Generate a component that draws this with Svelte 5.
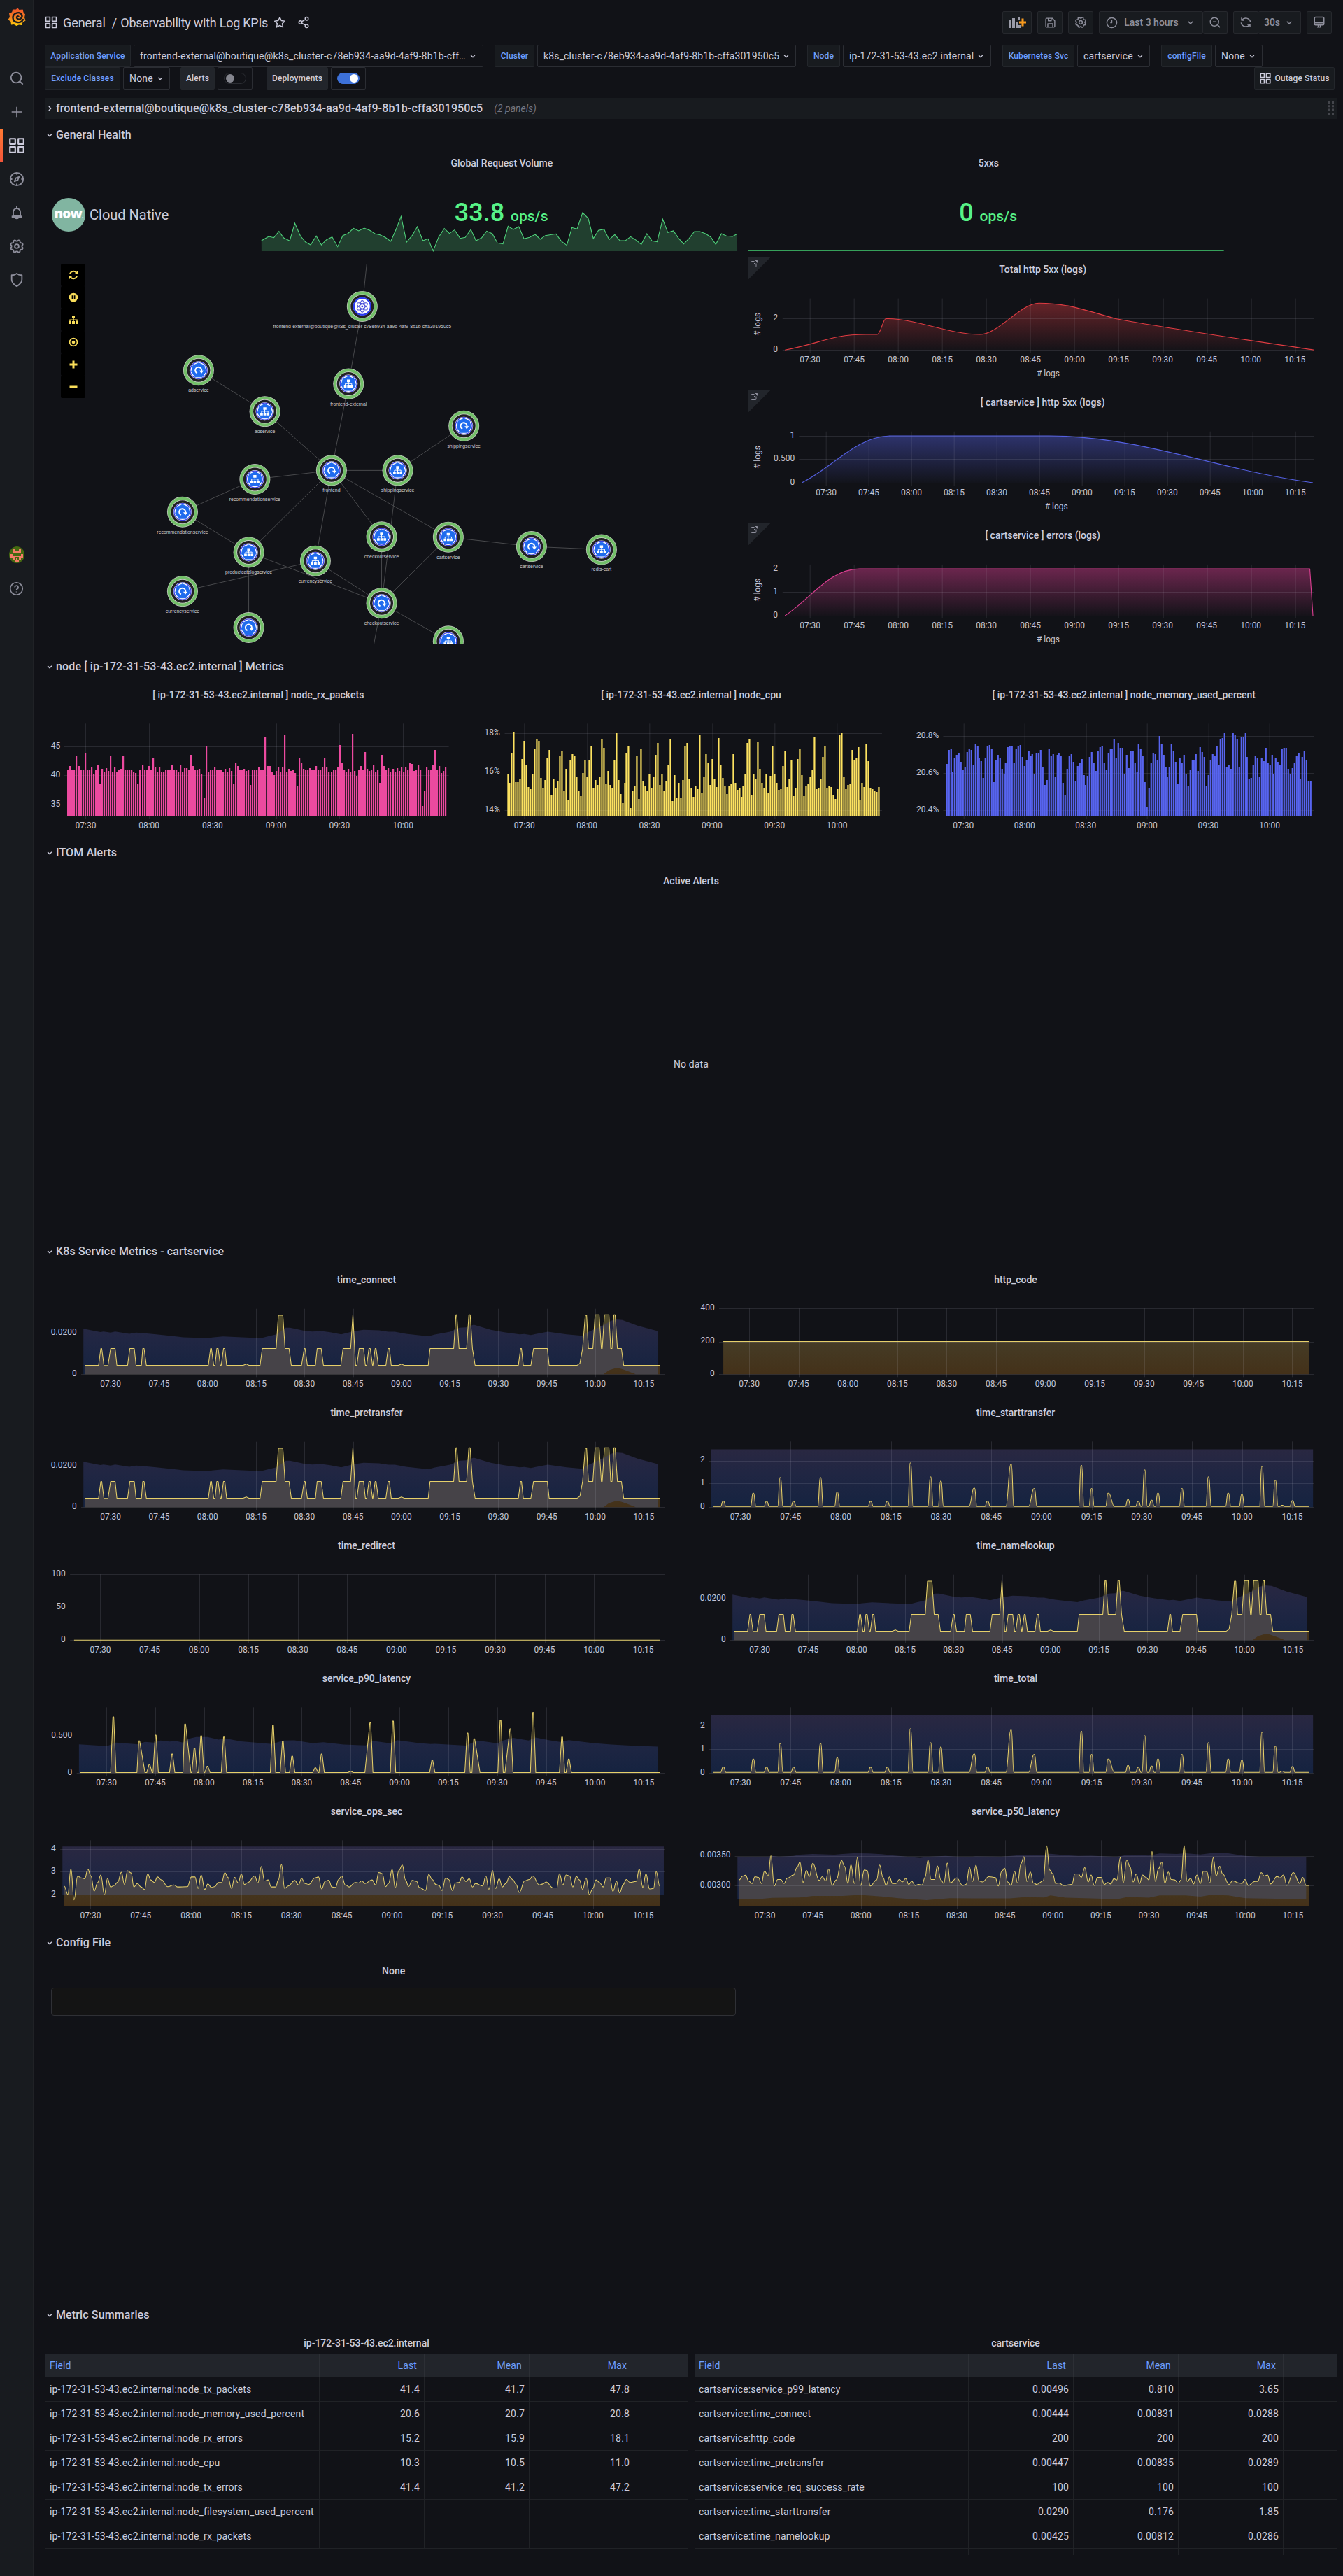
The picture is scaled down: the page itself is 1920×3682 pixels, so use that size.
<script>
  const PITCH = (1848 + 8) / 24;

  // Outline icons on a 24-unit canvas
  const icons = {
    search: 'M21.5 21.5l-4.6-4.6M19 11a8 8 0 1 1-16 0a8 8 0 0 1 16 0z',
    plus: 'M12 4v16M4 12h16',
    apps: 'M3 3h7v7h-7zM14 3h7v7h-7zM3 14h7v7h-7zM14 14h7v7h-7z',
    compass: 'M22 12a10 10 0 1 1-20 0a10 10 0 0 1 20 0zM12 2v3M12 19v3M2 12h3M19 12h3M15.5 8.5l-2 5l-5 2l2-5z',
    bell: 'M12 2v3M5 17h14M6.500 17v-6a5.500 5.500 0 0 1 11 0v6M9 17v1a3 3 0 0 0 6 0v-1M5 17v2h14v-2',
    shield: 'M4 4.500c3 .5 5.500-.3 8-2.500c2.500 2.200 5 3 8 2.500v7c0 5-3.500 8-8 10.500c-4.500-2.500-8-5.500-8-10.500z',
    help: 'M22 12a10 10 0 1 1-20 0a10 10 0 0 1 20 0zM9.300 9.800a2.800 2.800 0 1 1 4 2.600c-.9.5-1.300 1-1.300 1.900M12 16.500v1.200',
    star: 'M12 2.500l3 6.200l6.700 1l-4.900 4.700l1.200 6.800l-6-3.300l-6 3.300l1.200-6.800l-4.900-4.700l6.700-1z',
    share: 'M21 5a3 3 0 1 1-6 0a3 3 0 0 1 6 0zM9 12a3 3 0 1 1-6 0a3 3 0 0 1 6 0zM21 19a3 3 0 1 1-6 0a3 3 0 0 1 6 0zM15.500 6.500l-7 4M15.500 17.500l-7-4',
    save: 'M3 5a2 2 0 0 1 2-2h11l5 5v11a2 2 0 0 1-2 2h-14a2 2 0 0 1-2-2zM8 3v5h6v-5M7 21v-7h10v7',
    clock: 'M22 12a10 10 0 1 1-20 0a10 10 0 0 1 20 0zM12 6v6h-3',
    zoomout: 'M21.500 21.500l-4.600-4.600M19 11a8 8 0 1 1-16 0a8 8 0 0 1 16 0zM8 11h6',
    sync: 'M4 3v5h5M4.500 8a9 9 0 0 1 16.400 3.500M20 21v-5h-5M19.500 16a9 9 0 0 1-16.400-3.500',
    monitor: 'M5 2h14a2 2 0 0 1 2 2v11a2 2 0 0 1-2 2h-14a2 2 0 0 1-2-2v-11a2 2 0 0 1 2-2zM3 13h18M8 21h8M10 17v4M14 17v4',
    down: 'M7 10l5 5l5-5',
    right: 'M10 7l5 5l-5 5',
    ext: 'M18 11v8a2 2 0 0 1-2 2h-11a2 2 0 0 1-2-2v-12a2 2 0 0 1 2-2h8M15 3h6v6M21 3l-10 10',
    cog: gear(12, 12, 9.9, 8.1, 8) + 'M15.200 12a3.200 3.200 0 1 1-6.400 0a3.200 3.200 0 0 1 6.400 0z'
  };

  // Closed outline with n rounded teeth
  function gear(cx, cy, ro, ri, n) {
    const pts = [];
    for (let i = 0; i < n * 12; i++) {
      const a = (i / (n * 12)) * Math.PI * 2 + Math.PI / n;
      const k = Math.tanh(Math.cos(a * n) * -2.5);
      const r = (ro + ri) / 2 + ((ro - ri) / 2) * k;
      pts.push((cx + r * Math.cos(a)).toFixed(2) + ' ' + (cy + r * Math.sin(a)).toFixed(2));
    }
    return 'M' + pts.join('L') + 'Z';
  }

  // Coordinate frames: origin on the dashboard plus units per pixel
  const LOGS = { ox: 1040, oy: 360, sx: 1568 / 880, sy: 1568 / 580 };
  const NODE = { ox: 0, oy: 920, sx: 1568 / 960, sy: 3 };
  const NODE_R = { ...NODE, ox: 960 };
  const SVC_L = { ox: 0, oy: 1770, sx: 1.568, sy: 2.8 };
  const SVC_R = { ox: 960, oy: 1770, sx: 1568 / 960, sy: 2.8 };
  const SVC2_L = { ...SVC_L, oy: 2330 };
  const SVC2_R = { ...SVC_R, oy: 2330 };
  const STAT = { ox: 0, oy: 0, sx: 1568 / 960, sy: 3 };

  const parse = (s) => s.trim().split(/\s+/).map((p) => p.split(',').map(Number));
  const toPage = (f, pts) => pts.map(([x, y]) => [f.ox + x / f.sx, f.oy + y / f.sy]);
  const n2 = (v) => v.toFixed(2);
  const straight = (pts) => 'M' + pts.map(([x, y]) => n2(x) + ' ' + n2(y)).join('L');
  function smooth(pts) {
    let d = 'M' + n2(pts[0][0]) + ' ' + n2(pts[0][1]);
    for (let i = 1; i < pts.length; i++) {
      const [x0, y0] = pts[i - 1];
      const [x1, y1] = pts[i];
      const w = (x1 - x0) * 0.42;
      d += 'C' + [x0 + w, y0, x1 - w, y1, x1, y1].map(n2).join(' ');
    }
    return d;
  }
  function spikes(start, end, base, list) {
    const out = [[start, base]];
    for (const [x, y, l = 6, r = 6] of list) out.push([x - l, base], [x - 1, y], [x + 1, y], [x + r, base]);
    out.push([end, base]);
    return out;
  }

  const quarter = ['07:30', '07:45', '08:00', '08:15', '08:30', '08:45', '09:00', '09:15', '09:30', '09:45', '10:00', '10:15'];
  const half = ['07:30', '08:00', '08:30', '09:00', '09:30', '10:00'];

  let uid = 0;
  function chart(f, o) {
    const X = (x) => f.ox + x / f.sx;
    const Y = (y) => f.oy + y / f.sy;
    const names = o.half ? half : quarter;
    const step = (o.last - o.first) / (names.length - 1);
    const c = {
      id: 'c' + uid++,
      xs: names.map((t, i) => ({ t, x: X(o.first + step * i) })),
      ys: o.grid.map(([t, y]) => ({ t, y: Y(y) })),
      left: X(o.left), right: X(o.right), top: Y(o.top), bottom: Y(o.bottom), lab: X(o.lab),
      color: o.color, axis: o.axis, kind: o.kind, fillOp: o.fillOp
    };
    if (o.line) {
      const p = toPage(f, o.line);
      c.line = o.curve ? o.curve(p) : (o.soft ? smooth(p) : straight(p));
      c.area = c.line + 'L' + n2(p[p.length - 1][0]) + ' ' + n2(c.bottom) + 'L' + n2(p[0][0]) + ' ' + n2(c.bottom) + 'Z';
    }
    if (o.band) {
      c.band = straight(toPage(f, o.band)) + 'Z';
    }
    if (o.bars) {
      const w = (o.barEnd - o.barStart) / (o.bars.length - 1);
      c.bars = o.bars.map((y, i) => ({ x: Math.round(X(o.barStart + w * i) - 1), y: Math.round(Y(y)) }));
      c.barBottom = Math.round(Y(740));
    }
    return c;
  }

  // Log panels
  const logRed = chart(LOGS, { first: 211, last: 1446, top: 180, bottom: 379, left: 141, right: 1494, lab: 129, grid: [['2', 258], ['0', 379]], color: '#e03c42', axis: true, kind: 'log', fillOp: 0.45,
    line: parse('147,379 353,319 382,319 404,258 644,319 794,198 989,258 1495,379'),
    curve: (p) => {
      const [a, b, c, d, e, f, g, h] = p;
      return `M${a}C${a[0] + 50} ${a[1] - 9} ${b[0] - 50} ${b[1]} ${b}L${c}C${c[0] + 5} ${c[1]} ${d[0] - 4} ${d[1]} ${d}C${d[0] + 45} ${d[1]} ${e[0] - 45} ${e[1]} ${e}C${e[0] + 26} ${e[1]} ${f[0] - 26} ${f[1]} ${f}C${f[0] + 42} ${f[1]} ${g[0] - 40} ${g[1] - 11} ${g}C${g[0] + 80} ${g[1] + 15} ${h[0] - 80} ${h[1] - 12} ${h}`;
    } });
  const logBlue = chart(LOGS, { first: 252, last: 1447, top: 694, bottom: 893, left: 183, right: 1494, lab: 172, grid: [['1', 712], ['0.500', 801], ['0', 893]], color: '#5460e0', axis: true, kind: 'log', fillOp: 0.46,
    line: parse('190,892 418,711 820,711 1492,892'),
    curve: ([a, b, c, d]) => `M${a}C${a[0] + 45} ${a[1] - 22} ${b[0] - 50} ${b[1]} ${b}L${c}C${c[0] + 130} ${c[1]} ${d[0] - 130} ${d[1] - 17} ${d}` });
  const logPink = chart(LOGS, { first: 211, last: 1446, top: 1208, bottom: 1406, left: 141, right: 1494, lab: 129, grid: [['2', 1226], ['1', 1315], ['0', 1406]], color: '#dc3f92', axis: true, kind: 'log', fillOp: 0.48,
    line: parse('147,1406 337,1225 1484,1225 1492,1406'),
    curve: ([a, b, c, d]) => `M${a}C${a[0] + 37} ${a[1] - 24} ${b[0] - 43} ${b[1]} ${b}L${c}L${d}` });

  // Node metric bars
  const rxPeaks = { 180: 480, 185: 525, 200: 468, 219: 560, 228: 522, 234: 603, 259: 480, 289: 480, 319: 556, 324: 600, 333: 522, 357: 489, 402: 522, 422: 522, 447: 477, 472: 558, 477: 660, 481: 438, 545: 600, 550: 510, 584: 606, 620: 399, 625: 525, 630: 525, 640: 565, 664: 390, 689: 555, 694: 609, 699: 492, 704: 513, 757: 492, 793: 435, 798: 510, 823: 387, 832: 568, 842: 525, 852: 465, 872: 522, 886: 597, 891: 477, 896: 525, 955: 513, 960: 516, 977: 519, 986: 696, 991: 630, 1011: 520, 1016: 456, 1030: 555, 1040: 528 };
  const rxBase = [543, 537, 531, 543, 528, 525, 549, 540, 541, 549, 541, 534, 540, 543, 549, 540, 546, 534, 543, 544, 537, 531, 540, 549, 541, 546, 552];
  const rxBars = [];
  for (let i = 0; i < 179; i++) {
    const x = 159 + i * 4.955;
    const hit = Object.keys(rxPeaks).find((k) => Math.abs(k - x) < 2.48);
    rxBars.push(hit ? rxPeaks[hit] : rxBase[(i * 5 + (i >> 3)) % rxBase.length]);
  }
  const cpuBars = '561 597 471 378 594 594 579 495 417 519 615 624 561 453 408 417 576 621 585 489 456 651 579 618 591 480 459 633 537 669 501 474 480 570 630 654 555 498 573 501 441 621 585 606 573 408 447 600 546 606 618 498 384 585 645 684 597 468 438 705 630 612 480 666 453 591 612 630 558 618 573 477 426 606 561 630 588 519 408 675 564 663 597 660 585 441 426 579 621 657 609 624 393 639 570 474 513 606 495 579 615 405 522 576 612 645 612 603 474 597 627 618 657 609 558 426 408 648 561 582 423 537 597 618 561 642 567 441 558 597 627 624 525 462 615 582 498 654 618 495 450 564 654 609 600 573 540 399 624 621 579 486 441 621 609 615 651 666 624 393 384 573 624 606 603 456 501 489 444 672 597 615 432 504 621 624 630 636 615'.split(' ').map(Number);
  const memBars = '516 456 453 552 489 477 471 507 543 528 465 450 456 519 432 438 492 504 576 489 438 435 453 594 501 477 492 537 558 510 444 438 441 510 450 438 435 486 525 501 462 480 474 561 468 471 456 528 606 585 453 480 474 573 477 471 480 597 648 537 483 474 507 588 525 510 495 564 606 567 486 465 510 546 462 444 438 510 543 471 453 453 411 492 426 447 447 558 477 534 462 459 510 552 432 450 483 594 700 621 513 468 474 498 396 432 477 531 570 531 432 462 507 600 492 510 477 558 612 543 498 501 474 546 444 465 486 609 564 498 474 483 441 522 411 405 381 528 519 537 384 390 408 531 402 402 384 486 582 576 519 480 489 573 489 504 447 513 522 477 558 489 507 522 453 447 447 537 561 534 513 483 471 582 486 462 498 588 588'.split(' ').map(Number);
  const nodeRx = chart(NODE, { half: true, first: 200, last: 941, top: 343, bottom: 740, left: 150, right: 1048, lab: 141, grid: [['45', 442], ['40', 565], ['35', 690]], color: '#ec4a9f', kind: 'bars', bars: rxBars, barStart: 159, barEnd: 1041 });
  const nodeCpu = chart(NODE, { half: true, first: 1224, last: 1954, top: 343, bottom: 740, left: 1178, right: 2059, lab: 1167, grid: [['18%', 385], ['16%', 550], ['14%', 715]], color: '#fde260', kind: 'bars', bars: cpuBars, barStart: 1185, barEnd: 2052 });
  const nodeMem = chart(NODE_R, { half: true, first: 682, last: 1397, top: 343, bottom: 740, left: 635, right: 1500, lab: 625, grid: [['20.8%', 397], ['20.6%', 556], ['20.4%', 715]], color: '#5764f0', kind: 'bars', bars: memBars, barStart: 643, barEnd: 1493 });

  // Service metrics
  const connLine = parse('190,508 221,508 226,441 228,441 233,509 242,509 248,441 258,441 262,508 286,508 291,441 301,441 305,508 317,508 320,441 323,441 328,508 467,508 472,441 474,441 479,508 482,508 486,441 489,441 494,508 496,508 501,441 504,441 508,508 545,508 552,503 558,508 583,508 588,441 619,441 624,308 634,308 639,441 648,441 653,508 676,508 682,441 684,441 689,508 707,508 711,441 720,441 725,508 764,508 769,441 786,441 791,306 797,508 800,508 805,441 815,441 819,508 822,508 827,441 830,441 835,508 836,508 841,441 843,441 848,508 865,508 870,441 873,441 877,508 893,508 900,503 906,508 960,508 964,441 1017,441 1022,306 1024,306 1029,441 1046,441 1051,306 1054,306 1059,441 1065,508 1162,508 1167,441 1169,441 1173,508 1190,508 1196,441 1227,441 1231,508 1294,508 1300,500 1306,441 1312,308 1315,308 1319,441 1329,441 1334,306 1343,306 1348,441 1350,441 1355,306 1365,306 1369,441 1372,441 1376,306 1379,306 1384,441 1393,441 1398,508 1479,508');
  const connBand = parse('187,362 225,375 232,373 248,377 258,373 290,382 305,377 325,380 350,384 380,390 410,396 470,400 475,397 500,393 585,400 600,393 620,384 640,358 650,358 683,370 700,373 720,371 740,376 765,384 790,373 815,366 850,368 870,374 885,374 910,382 960,392 975,385 1009,374 1030,358 1045,356 1062,346 1100,366 1130,376 1165,384 1175,383 1190,387 1228,374 1270,384 1305,390 1320,374 1335,362 1350,350 1370,330 1380,325 1395,327 1430,350 1474,371 1474,544 1425,544 1405,530 1390,521 1378,521 1365,528 1353,544 187,544');
  const moved = (pts, dy, fx = (x) => x) => pts.map(([x, y]) => [fx(x), y + dy]);
  const conn = (f, dy, fx = (x) => x, o = {}) => chart(f, { first: 248, last: 1443, top: 282 + dy, bottom: 544 + dy, left: 182, right: 1490, lab: 172, grid: [['0.0200', 379 + dy], ['0', 544 + dy]], kind: 'svc', line: moved(connLine, dy, fx), band: moved(connBand, dy, fx), ...o });
  const connect = conn(SVC_L, 0);
  const pretransfer = conn(SVC_L, 532);
  const namelookup = conn(SVC_R, 1064, (x) => 206 + (x - 248) * 1.0418, { first: 206, last: 1451, left: 137, right: 1500, lab: 127 });
  const httpCode = chart(SVC_R, { first: 181.5, last: 1449.5, top: 281, bottom: 544, left: 111, right: 1500, lab: 101, grid: [['400', 281], ['200', 413], ['0', 544]], kind: 'svc', line: [[121, 413], [1489, 413]] });
  const redirect = chart(SVC_L, { first: 225, last: 1442, top: 1345, bottom: 1608, left: 157, right: 1490, lab: 147, grid: [['100', 1345], ['50', 1477], ['0', 1608]], kind: 'svc', line: [[166, 1608], [1480, 1608]] });

  const startPeaks = [[121, 1052], [191, 1020], [222, 1053], [254, 958], [285, 1053], [348, 958], [387, 1015], [465, 1053], [504, 1053], [558, 899], [605, 955], [629, 972], [707, 1000, 12], [738, 1052], [793, 904, 12], [847, 1002, 13], [957, 909], [981, 1002], [1020, 1020, 6, 14], [1066, 1046], [1090, 1053], [1105, 927], [1121, 1048], [1136, 1020], [1192, 1002], [1254, 955], [1300, 1020], [1332, 1025], [1379, 913], [1410, 969], [1426, 1068], [1450, 1050]];
  const start = (f, dy) => chart(f, { first: 161, last: 1449.5, top: 813 + dy, bottom: 1076 + dy, left: 88, right: 1500, lab: 78, grid: [['2', 889 + dy], ['1', 981 + dy], ['0', 1076 + dy]], kind: 'svc', soft: true, line: moved(spikes(98, 1489, 1073, startPeaks), dy), band: moved([[93, 844], [1498, 844], [1498, 1076], [93, 1076]], dy) });
  const starttransfer = start(SVC_R, 0);
  const total = start(SVC2_R, -504);

  const p90 = chart(SVC2_L, { first: 238.5, last: 1443, top: 309, bottom: 572, left: 172, right: 1490, lab: 162, grid: [['0.500', 424], ['0', 572]], kind: 'svc',
    line: spikes(180, 1479, 570, [[254, 347], [312, 443, 5, 13], [335, 538], [349, 420], [386, 496], [415, 376, 5, 13], [436, 473], [451, 423], [465, 545], [502, 428], [612, 381], [634, 445], [655, 504], [707, 551], [721, 496], [786, 565], [830, 371, 12], [881, 364], [969, 521], [1048, 412], [1063, 435, 5, 13], [1122, 361], [1144, 395, 12], [1195, 330], [1260, 428], [1275, 516]]),
    band: parse('177,457 240,464 260,450 310,457 325,447 345,450 360,442 380,446 395,444 410,450 425,434 440,428 465,428 490,438 505,433 540,445 610,456 635,442 660,441 700,452 725,449 770,458 820,461 835,443 875,453 890,440 940,452 965,456 975,455 1045,462 1070,442 1115,453 1125,443 1150,431 1185,442 1200,430 1230,440 1255,447 1275,440 1330,452 1370,458 1420,463 1474,466 1474,572 177,572') });

  const ops = chart(SVC2_L, { first: 203, last: 1442, top: 841, bottom: 1104, left: 135, right: 1490, lab: 125, grid: [['4', 877], ['3', 967], ['2', 1058]], kind: 'svc', soft: true,
    line: parse('144,1025 152,1058 159,955 166,1080 174,984 182,992 190,995 197,956 204,985 211,1045 219,1010 226,980 234,1060 241,994 248,1028 256,1022 264,1008 272,969 279,1018 286,963 294,972 300,1028 308,1014 316,1028 324,1038 331,975 338,1000 346,1010 353,988 362,1000 376,1027 390,1020 398,1028 420,1027 429,988 437,988 444,1034 451,980 459,1038 466,1016 474,1030 482,1026 489,1010 497,1010 504,971 511,990 519,1034 526,990 534,1012 541,976 548,1018 556,1010 571,984 578,1012 586,946 593,1004 601,1000 608,1028 618,1028 624,1000 631,938 638,1034 646,1024 661,1002 669,1020 676,994 684,1014 692,1018 706,992 714,988 721,1036 729,1005 737,1001 744,1028 752,1030 759,998 766,984 774,1020 783,1028 796,1010 804,1012 811,1003 818,1014 834,1000 842,1020 849,970 857,975 864,1027 871,1014 879,958 886,1032 894,962 902,940 909,1000 916,1026 924,1002 934,1006 940,1030 954,1042 961,978 969,998 977,1018 984,1022 991,1042 999,992 1006,998 1014,1042 1021,1012 1029,1010 1036,988 1044,1006 1052,995 1059,1028 1066,1014 1082,1024 1089,984 1096,1038 1104,962 1111,1034 1119,995 1126,1028 1134,1014 1142,987 1150,1000 1157,1018 1164,1050 1176,1004 1187,998 1194,984 1209,1020 1217,1016 1224,1008 1240,1032 1248,1032 1254,975 1262,1020 1269,980 1277,984 1284,1028 1292,986 1299,1000 1306,1038 1314,992 1321,1058 1329,1034 1336,1000 1344,1010 1352,1028 1359,992 1367,992 1374,1046 1382,1005 1389,1052 1397,1018 1404,998 1412,1010 1426,1006 1433,956 1441,1030 1448,975 1456,1036 1465,1034 1471,966 1479,1025'),
    band: [[140, 866], [1488, 866], [1488, 1059], [140, 1059]] });

  const p50 = chart(SVC2_R, { first: 218, last: 1451, top: 841, bottom: 1104, left: 148, right: 1500, lab: 138, grid: [['0.00350', 903], ['0.00300', 1023]], kind: 'svc', soft: true,
    line: parse('158,1000 166,985 173,981 180,1004 188,1014 195,987 203,990 210,1014 217,965 226,982 232,903 240,1024 248,998 255,998 263,1014 270,993 285,980 293,950 300,928 307,1010 315,962 322,986 330,933 345,1002 352,987 360,1004 367,956 375,1022 385,1000 397,922 404,945 412,1014 419,939 427,1014 434,911 442,1022 450,960 457,962 464,1024 479,1000 486,940 494,990 501,1022 509,988 516,1014 524,1014 532,998 539,1008 547,994 554,1018 561,1005 569,1022 577,1018 585,1020 592,990 599,920 606,998 614,998 621,944 629,1000 636,1014 644,932 651,1012 666,992 680,1022 688,1018 696,950 703,1006 711,940 718,1004 726,1008 741,987 756,990 763,1024 771,965 778,953 785,1008 793,1022 801,965 808,1012 816,935 823,907 830,1006 838,968 845,1012 853,1018 868,1003 876,863 883,960 890,975 897,1014 905,1012 915,1022 935,1018 942,976 950,976 957,990 965,950 973,1008 980,980 987,1022 995,990 1003,990 1011,1018 1018,1010 1026,1016 1033,995 1040,1000 1048,911 1055,1012 1063,920 1071,948 1078,1008 1085,976 1093,1014 1100,980 1108,990 1115,1000 1122,886 1130,1006 1137,955 1145,928 1152,1014 1160,968 1167,998 1175,1000 1183,1013 1190,1000 1197,862 1204,1006 1212,994 1219,1016 1227,980 1235,1014 1242,965 1250,966 1257,1012 1265,911 1272,984 1280,945 1287,976 1302,1018 1310,1003 1325,1012 1332,1014 1339,998 1347,1022 1362,1006 1369,1006 1377,970 1384,984 1392,980 1399,1016 1414,986 1421,992 1429,980 1437,1022 1452,970 1467,1014 1474,990 1482,1022 1489,1022'),
    band: parse('154,907 225,908 235,904 250,907 285,904 300,899 330,896 380,899 400,896 425,893 460,894 490,897 530,904 580,912 600,907 640,904 690,910 710,906 770,907 825,899 860,901 885,895 920,901 950,904 980,903 1040,908 1065,899 1115,902 1140,894 1180,896 1200,893 1235,898 1265,892 1300,893 1340,904 1380,908 1430,908 1482,910 1482,1077 1340,1073 1300,1062 1260,1060 1235,1067 1200,1062 1140,1062 1115,1071 1065,1068 1040,1077 980,1074 920,1071 885,1062 870,1070 825,1069 790,1074 700,1074 650,1073 595,1081 530,1073 490,1066 440,1060 400,1064 330,1064 300,1070 235,1072 200,1077 154,1075') });

  // Request volume sparkline
  const sparkPts = toPage(STAT, parse('611,1032 628,1014 640,1019 652,992 663,1020 677,1033 689,957 702,1012 714,1038 726,1050 739,1012 751,1050 763,1028 776,1016 789,1058 801,1010 813,1001 826,979 838,990 851,978 864,988 876,1002 888,1007 900,1018 913,1035 925,985 937,928 950,1038 963,1010 975,972 988,1032 1000,1024 1012,1076 1025,1016 1038,980 1050,1001 1062,986 1075,1022 1087,1018 1100,984 1112,1032 1125,1020 1137,991 1150,1002 1162,1042 1175,1046 1187,970 1199,984 1212,972 1224,1024 1237,1018 1250,1005 1262,1026 1274,1010 1299,1003 1311,1034 1324,1052 1336,976 1348,982 1361,912 1374,936 1386,1023 1398,988 1411,983 1423,1028 1436,1006 1448,1032 1461,1032 1473,1015 1486,1030 1498,1048 1511,1002 1523,1033 1535,1037 1548,940 1560,997 1573,990 1585,1022 1597,1046 1610,1022 1622,993 1635,993 1648,1002 1660,1016 1672,1048 1685,1002 1697,1012 1711,1014 1722,1003'));
  const spark = straight(sparkPts);
  const sparkArea = spark + 'L1054.400 359L374.200 359Z';

  // Service map
  const mx = (x) => x / (1568 / 1060);
  const my = (y) => 360 + y / (1568 / 620);
  const nodes = {
    a: [766, 197, 'atom', 'frontend-external@boutique@k8s_cluster-c78eb934-aa9d-4af9-8b1b-cffa301950c5'],
    b: [420, 428, 'loop', 'adservice'], c: [560, 577, 'tree', 'adservice'], d: [737, 477, 'tree', 'frontend-external'],
    e: [981, 629, 'loop', 'shippingservice'], f: [701, 790, 'loop', 'frontend'], g: [841, 790, 'tree', 'shippingservice'],
    h: [539, 822, 'tree', 'recommendationservice'], i: [386, 940, 'loop', 'recommendationservice'],
    j: [526, 1086, 'tree', 'productcatalogservice'], k: [667, 1117, 'tree', 'currencyservice'], l: [807, 1030, 'tree', 'checkoutservice'],
    m: [948, 1031, 'tree', 'cartservice'], n: [1124, 1065, 'loop', 'cartservice'], o: [1272, 1076, 'tree', 'redis-cart'],
    p: [386, 1227, 'loop', 'currencyservice'], q: [526, 1358, 'loop', ''], r: [807, 1270, 'loop', 'checkoutservice'], s: [948, 1407, 'tree', '']
  };
  const ends = { ...nodes, y: [777, 20], z: [785, 1470] };
  const edges = 'ya ad df bc cf fg ge fh hi ij fj fk fl fm mn no gr lr mr jr kr kp jq rs rz'.split(' ').map((e) => [ends[e[0]], ends[e[1]]]);
  const nodeList = Object.values(nodes);
  const mapTools = ['sync', 'pause', 'tree', 'target', 'plus', 'minus'];

  const variables = [
    { label: 'Application Service', value: 'frontend-external@boutique@k8s_cluster-c78eb934-aa9d-4af9-8b1b-cff…', lw: 123, w: 500 },
    { label: 'Cluster', value: 'k8s_cluster-c78eb934-aa9d-4af9-8b1b-cffa301950c5', lw: 57, w: 370 },
    { label: 'Node', value: 'ip-172-31-53-43.ec2.internal', lw: 47, w: 212 },
    { label: 'Kubernetes Svc', value: 'cartservice', lw: 103, w: 104 },
    { label: 'configFile', value: 'None', lw: 73, w: 68 }
  ];
  const side = ['search', 'plus', 'apps', 'compass', 'bell', 'cog', 'shield'];

  const rows = [
    { y: 1, t: 'General Health' }, { y: 21, t: 'node [ ip-172-31-53-43.ec2.internal ] Metrics' }, { y: 28, t: 'ITOM Alerts' },
    { y: 43, t: 'K8s Service Metrics - cartservice' }, { y: 69, t: 'Config File' }, { y: 83, t: 'Metric Summaries' }
  ];
  const charts = [
    { x: 13, y: 6, w: 11, h: 5, t: 'Total http 5xx (logs)', c: logRed, link: true },
    { x: 13, y: 11, w: 11, h: 5, t: '[ cartservice ] http 5xx (logs)', c: logBlue, link: true },
    { x: 13, y: 16, w: 11, h: 5, t: '[ cartservice ] errors (logs)', c: logPink, link: true },
    { x: 0, y: 22, w: 8, h: 6, t: '[ ip-172-31-53-43.ec2.internal ] node_rx_packets', c: nodeRx },
    { x: 8, y: 22, w: 8, h: 6, t: '[ ip-172-31-53-43.ec2.internal ] node_cpu', c: nodeCpu },
    { x: 16, y: 22, w: 8, h: 6, t: '[ ip-172-31-53-43.ec2.internal ] node_memory_used_percent', c: nodeMem },
    { x: 0, y: 44, w: 12, h: 5, t: 'time_connect', c: connect },
    { x: 12, y: 44, w: 12, h: 5, t: 'http_code', c: httpCode },
    { x: 0, y: 49, w: 12, h: 5, t: 'time_pretransfer', c: pretransfer },
    { x: 12, y: 49, w: 12, h: 5, t: 'time_starttransfer', c: starttransfer },
    { x: 0, y: 54, w: 12, h: 5, t: 'time_redirect', c: redirect },
    { x: 12, y: 54, w: 12, h: 5, t: 'time_namelookup', c: namelookup },
    { x: 0, y: 59, w: 12, h: 5, t: 'service_p90_latency', c: p90 },
    { x: 12, y: 59, w: 12, h: 5, t: 'time_total', c: total },
    { x: 0, y: 64, w: 12, h: 5, t: 'service_ops_sec', c: ops },
    { x: 12, y: 64, w: 12, h: 5, t: 'service_p50_latency', c: p50 }
  ];
  const place = (x, y, w, h) => `grid-area:${y + 1}/${x + 1}/span ${h}/span ${w}`;
  const box = (p) => `${64 + p.x * PITCH} ${140 + p.y * 38 + 34} ${p.w * PITCH - 8} ${p.h * 38 - 42}`;

  const ip = 'ip-172-31-53-43.ec2.internal';
  const tables = [
    { x: 0, t: ip, rows: [
      [ip + ':node_tx_packets', '41.4', '41.7', '47.8'], [ip + ':node_memory_used_percent', '20.6', '20.7', '20.8'],
      [ip + ':node_rx_errors', '15.2', '15.9', '18.1'], [ip + ':node_cpu', '10.3', '10.5', '11.0'],
      [ip + ':node_tx_errors', '41.4', '41.2', '47.2'], [ip + ':node_filesystem_used_percent', '', '', ''], [ip + ':node_rx_packets', '', '', '']] },
    { x: 12, t: 'cartservice', more: true, rows: [
      ['cartservice:service_p99_latency', '0.00496', '0.810', '3.65'], ['cartservice:time_connect', '0.00444', '0.00831', '0.0288'],
      ['cartservice:http_code', '200', '200', '200'], ['cartservice:time_pretransfer', '0.00447', '0.00835', '0.0289'],
      ['cartservice:service_req_success_rate', '100', '100', '100'], ['cartservice:time_starttransfer', '0.0290', '0.176', '1.85'],
      ['cartservice:time_namelookup', '0.00425', '0.00812', '0.0286']] }
  ];
</script>

{#snippet icon(name, size, sw = 2)}
  <svg class="ic" width={size} height={size} viewBox="0 0 24 24"><path d={icons[name]} stroke-width={sw} /></svg>
{/snippet}

{#snippet plot(p)}
  {@const c = p.c}
  <svg class="plot" viewBox={box(p)}>
    <defs>
      <linearGradient id={c.id + 'g'} gradientUnits="userSpaceOnUse" x1="0" x2="0" y1={c.top} y2={c.bottom}>
        {#if c.kind === 'log'}
          <stop offset="0" stop-color={c.color} stop-opacity={c.fillOp} /><stop offset="1" stop-color={c.color} stop-opacity="0.02" />
        {:else}
          <stop offset="0" stop-color="#514e2c" /><stop offset="0.5" stop-color="#453c26" /><stop offset="1" stop-color="#443119" />
        {/if}
      </linearGradient>
      <linearGradient id={c.id + 'b'} gradientUnits="userSpaceOnUse" x1="0" x2="0" y1={c.top} y2={c.bottom}>
        <stop offset="0" stop-color="#2c2841" /><stop offset="0.5" stop-color="#202643" /><stop offset="1" stop-color="#152340" />
      </linearGradient>
      {#if c.band}<clipPath id={c.id + 'c'}><path d={c.band} /></clipPath>{/if}
    </defs>
    {#if c.kind === 'svc'}
      {#if c.band}<path d={c.band} fill="url(#{c.id}b)" />{/if}
      <path d={c.area} fill="url(#{c.id}g)" />
      {#if c.band}<path d={c.area} fill="#464348" clip-path="url(#{c.id}c)" />{/if}
    {:else if c.kind === 'log'}
      <path d={c.area} fill="url(#{c.id}g)" />
    {/if}
    {#each c.xs as t}
      <line class="grid" x1={Math.round(t.x) + 0.5} x2={Math.round(t.x) + 0.5} y1={c.top} y2={c.bottom + 4} />
      <text x={t.x} y={c.bottom + (c.bars ? 17.3 : 18)} text-anchor="middle">{t.t}</text>
    {/each}
    {#each c.ys as t}
      <line class="grid" x1={c.left} x2={c.right} y1={Math.round(t.y) + 0.5} y2={Math.round(t.y) + 0.5} />
      <text x={c.lab} y={t.y + 2.8} text-anchor="end">{t.t}</text>
    {/each}
    {#if c.bars}
      {#each c.bars as b}
        <rect x={b.x} y={b.y} width="2.2" height={c.barBottom - b.y} fill={c.color} />
      {/each}
    {/if}
    {#if c.line}<path d={c.line} fill="none" stroke={c.color || '#e6d06a'} stroke-width={c.kind === 'log' ? 1.1 : 1.05} stroke-linejoin="round" />{/if}
    {#if c.axis}
      <text x={(c.left + c.right) / 2} y={c.bottom + 38} text-anchor="middle"># logs</text>
      <text transform="translate(1087.500 {(c.top + c.bottom) / 2}) rotate(-90)" text-anchor="middle"># logs</text>
    {/if}
  </svg>
{/snippet}

<div class="app">
  <nav class="side">
    <svg class="logo" width="28" height="30" viewBox="0 0 28 30">
      <defs><linearGradient id="lg" x1="0" x2="0" y1="0" y2="1"><stop offset="0" stop-color="#f0502a" /><stop offset=".55" stop-color="#f48020" /><stop offset="1" stop-color="#fdd20a" /></linearGradient></defs>
      <path d="M13 3.500L15 1L17.500 4L22.500 3.500L23.500 7.500L26 10.500L25 15L26.500 19.500L22.500 22L21 26L17 25.500L13.500 27L10 25L6 25.500L5.500 21L1.500 18L4 14.500L3 9L7 7.500L8.500 3.500Z" fill="url(#lg)" />
      <path d="M23 18C20 24 9 23.500 8.500 15.500C8.500 8 18 6 21 11C23 15.500 18 19 15 17C13 15 14.500 12.500 16.500 13.500" fill="none" stroke="#181b1f" stroke-width="2.400" stroke-linecap="round" />
    </svg>
    <div class="links">
      {#each side as s}
        <span class:active={s === 'apps'}>{@render icon(s, s === 'apps' ? 26 : 22, s === 'plus' ? 1.700 : 2)}</span>
      {/each}
    </div>
    <div class="links foot">
      <span>
        <svg width="22" height="24" viewBox="0 0 22 24">
          <ellipse cx="11" cy="12" rx="11" ry="12" fill="#446910" />
          <path d="M5 3h3v4h6v-4h3v7h-3v-1h-6v1h-3zM2 11h3v3h12v-3h3v6h-3v3h-3v3h-6v-3h-3v-3h-3z" fill="#f47c68" />
          <path d="M8 15h6v5h-6z" fill="#446910" /><path d="M10 16h2v3h-2z" fill="#f47c68" />
        </svg>
      </span>
      <span>{@render icon('help', 21, 1.900)}</span>
    </div>
  </nav>

  <main>
    <header>
      <div class="crumbs">{@render icon('apps', 20, 2)}<b class="fold">General</b><b class="slash">/</b><b class="title">Observability with Log KPIs</b>
        <i class="st">{@render icon('star', 18, 2)}</i><i class="sh">{@render icon('share', 18, 2)}</i></div>
      <div class="tools">
        <span class="btn add">
          <svg width="25" height="16" viewBox="0 0 25 16"><path d="M0 5h4v11h-4zM5 2h4v14h-4zM10 7h3v9h-3zM14 0h2v4h-2zM14 12h3v4h-3z" fill="#9a9ba7" /><path d="M18.500 2.500h3v4h3.500v3h-3.500v4h-3v-4h-3.500v-3h3.500z" fill="#f79a1e" /></svg>
        </span>
        <span class="btn">{@render icon('save', 17)}</span>
        <span class="btn">{@render icon('cog', 18)}</span>
        <span class="group"><span class="btn time">{@render icon('clock', 17)}<em>Last 3 hours</em>{@render icon('down', 16, 2.200)}</span><span class="btn zo">{@render icon('zoomout', 18)}</span></span>
        <span class="group"><span class="btn">{@render icon('sync', 18)}</span><span class="btn every"><em>30s</em>{@render icon('down', 16, 2.200)}</span></span>
        <span class="btn">{@render icon('monitor', 18)}</span>
      </div>
    </header>

    <section class="vars">
      <div class="line">
        {#each variables as v}
          <div class="var"><span class="label" style="width:{v.lw}px">{v.label}</span><span class="sel" style="width:{v.w}px"><u>{v.value}</u>{@render icon('down', 14, 2.200)}</span></div>
        {/each}
      </div>
      <div class="line">
        <div class="var first"><span class="label ex">Exclude Classes</span><span class="sel sm"><u>None</u>{@render icon('down', 14, 2.200)}</span></div>
        <div class="var tog"><span class="label plain al">Alerts</span><span class="swbox"><span class="sw"></span></span></div>
        <div class="var"><span class="label plain de">Deployments</span><span class="swbox"><span class="sw on"></span></span></div>
        <span class="outage">{@render icon('apps', 18, 2.300)}Outage Status</span>
      </div>
    </section>

    <section class="dash">
      <div class="row shut" style={place(0, 0, 24, 1)}>{@render icon('right', 14, 2.400)}<h3>frontend-external@boutique@k8s_cluster-c78eb934-aa9d-4af9-8b1b-cffa301950c5</h3><small>(2 panels)</small>
        <svg class="grip" width="9" height="20" viewBox="0 0 9 20">{#each [0, 5.3, 10.6, 16] as y}<path d="M0 {y}h3v3h-3zM5 {y}h3v3h-3z" />{/each}</svg>
      </div>
      {#each rows as r}
        <div class="row" style={place(0, r.y, 24, 1)}>{@render icon('down', 14, 2.400)}<h3>{r.t}</h3></div>
      {/each}

      <div class="brand" style={place(0, 2, 4, 4)}><span class="now">now<s>.</s></span>Cloud Native</div>

      <div class="panel" style={place(4, 2, 9, 4)}>
        <h2>Global Request Volume</h2>
        <svg class="plot stat" viewBox="373.333 250 688 110">
          <path d={sparkArea} fill="#213f2f" /><path d={spark} fill="none" stroke="#4fd07a" stroke-width="1.100" />
          <text class="val" x="717" y="315.700" text-anchor="middle">33.8 <tspan class="unit">ops/s</tspan></text>
        </svg>
      </div>
      <div class="panel" style={place(13, 2, 9, 4)}>
        <h2>5xxs</h2>
        <svg class="plot stat" viewBox="1069.333 250 688 110">
          <path d="M1070 358.500H1750" stroke="#36a05a" stroke-width="1.200" />
          <text class="val" x="1413" y="315.700" text-anchor="middle">0 <tspan class="unit">ops/s</tspan></text>
        </svg>
      </div>

      <div class="panel map" style={place(0, 6, 13, 15)}>
        <div class="maptools">
          {#each mapTools as t}
            <span><svg width="14" height="14" viewBox="0 0 14 14">
              {#if t === 'sync'}<path d="M2 5.500A5.300 5.300 0 0 1 11 3.500M12 8.500A5.300 5.300 0 0 1 3 10.500" fill="none" stroke="#fade5a" stroke-width="2" /><path d="M13 1v5h-5zM1 13v-5h5z" />
              {:else if t === 'pause'}<circle cx="7" cy="7" r="6.300" /><path d="M4.600 4.300h1.800v5.400h-1.800zM7.700 4.300h1.800v5.400h-1.800z" fill="#000" />
              {:else if t === 'tree'}<path d="M5 1h4v4h-1.300v1.500h5v2.500h1.300v4h-4v-4h1.300v-1.200h-3.600v1.200h1.300v4h-4v-4h1.300v-1.200h-3.600v1.200h1.300v4h-4v-4h1.300v-2.500h5v-1.500h-1.300z" />
              {:else if t === 'target'}<circle cx="7" cy="7" r="5.400" fill="none" stroke="#fade5a" stroke-width="1.700" /><circle cx="7" cy="7" r="2.300" />
              {:else if t === 'plus'}<path d="M5.500 1.500h3v4h4v3h-4v4h-3v-4h-4v-3h4z" />
              {:else}<path d="M1.500 5.500h11v3h-11z" />{/if}
            </svg></span>
          {/each}
        </div>
        <svg class="net" viewBox="72 377 900 544" width="900" height="544">
          {#each edges as [a, b]}<line x1={mx(a[0])} y1={my(a[1])} x2={mx(b[0])} y2={my(b[1])} />{/each}
          {#each nodeList as n}
            <g transform="translate({mx(n[0])} {my(n[1])})">
              <circle r="22" fill="#c2c8bf" /><circle r="21.300" fill="#73bf69" /><circle r="17.300" fill="#cfd3cc" /><circle r="16.500" fill="#212124" />
              <circle r="13" fill="#fff" /><circle r="12" fill="none" stroke="#3b3fe0" stroke-width="1.300" />
              {#if n[2] === 'atom'}
                <circle r="12" fill="none" stroke="#2b3cf0" stroke-width="2.200" />
                <g fill="none" stroke="#4a50d8" stroke-width="1.100"><ellipse rx="3.300" ry="8.500" /><ellipse rx="3.300" ry="8.500" transform="rotate(60)" /><ellipse rx="3.300" ry="8.500" transform="rotate(120)" /></g><circle r="1.400" fill="#3b3fe0" />
              {:else}
                <path d="M0 -10.500L8 -6.800L10.200 2L5 9.500L-5 9.500L-10.200 2L-8 -6.800Z" fill="#1f6bee" stroke="#1f6bee" stroke-width="1" stroke-linejoin="round" />
                {#if n[2] === 'loop'}
                  <path d="M-2 4.200A4.500 4.500 0 1 1 4.200 1" fill="none" stroke="#fff" stroke-width="2" /><path d="M1 0.500h6.200l-3.200 4.200z" fill="#fff" />
                {:else}
                  <path d="M-2.200 -6h4.400v3.600h-4.400zM-6.500 2h3.700v3.500h-3.700zM-1.900 2h3.800v3.500h-3.800zM2.800 2h3.700v3.500h-3.700z" fill="#fff" /><path d="M0 -3v5M-4.600 2v-2.300h9.200v2.300" fill="none" stroke="#fff" stroke-width="1" />
                {/if}
              {/if}
              <text y="31" text-anchor="middle">{n[3]}</text>
            </g>
          {/each}
        </svg>
      </div>

      {#each charts as p}
        <div class="panel" style={place(p.x, p.y, p.w, p.h)}>
          {#if p.link}<span class="corner">{@render icon('ext', 12, 2)}</span>{/if}
          <h2>{p.t}</h2>
          {@render plot(p)}
        </div>
      {/each}

      <div class="panel" style={place(0, 29, 24, 14)}><h2>Active Alerts</h2><p class="nodata">No data</p></div>
      <div class="panel" style={place(0, 70, 13, 13)}><h2>None</h2><div class="code"></div></div>

      {#each tables as t}
        <div class="panel" style={place(t.x, 84, 12, 9)}>
          <h2 class="tt">{t.t}</h2>
          <div class="table">
            <div class="tr th"><span>Field</span><span>Last</span><span>Mean</span><span>Max</span><span></span></div>
            {#each t.rows as r}
              <div class="tr">{#each r as cell}<span>{cell}</span>{/each}<span></span></div>
            {/each}
            {#if t.more}<div class="tr cut"><span></span><span></span><span></span><span></span><span></span></div>{/if}
          </div>
        </div>
      {/each}
    </section>
  </main>
</div>

<style>
  :global(body) { background: #111217; }
  .app { display: flex; width: 1920px; height: 3682px; background: #111217; color: #ccccdc; font: 400 14px/1.5 Roboto, sans-serif; letter-spacing: 0.15px; overflow: hidden; }
  .ic { display: block; flex: none; fill: none; stroke: currentColor; stroke-linejoin: round; }
  .side { box-sizing: border-box; width: 48px; background: #181b1f; border-right: 1px solid #202226; display: flex; flex-direction: column; align-items: stretch; color: #8e8f9c; }
  .logo { margin: 10px 0 48px 10px; }
  .links span { display: flex; width: 47px; height: 48px; align-items: center; justify-content: center; box-sizing: border-box; }
  .links .active { color: #ccccdc; background: linear-gradient(#ff7a33, #f2553a) no-repeat left / 4px 100%; }
  .links.foot { margin-top: 345px; }
  main { flex: 1; display: flex; flex-direction: column; padding: 16px 8px 0 16px; min-width: 0; }
  header { height: 32px; display: flex; justify-content: space-between; align-items: center; padding-right: 8px; }
  .crumbs { display: flex; align-items: center; font-size: 18px; letter-spacing: -0.05px; margin-left: -1px; }
  .crumbs b { font-weight: 400; margin-left: 7px; white-space: nowrap; }
  .crumbs .slash { margin-left: 9px; }
  .crumbs .title { margin-left: 5px; letter-spacing: -0.25px; }
  .crumbs i { display: flex; margin-left: 8px; } .crumbs .sh { margin-left: 16px; }
  .tools { display: flex; gap: 8px; color: #8e8f9c; }
  .btn { box-sizing: border-box; height: 32px; width: 36px; border: 1px solid #26282d; border-radius: 2px; background: #181b1f; display: flex; align-items: center; justify-content: center; }
  .btn.add { width: 42px; }
  .group { display: flex; }
  .group .btn + .btn { border-left: 0; }
  .time { width: 149px; } .zo { width: 35px; } .every { width: 61px; }
  .btn em { font-style: normal; font-weight: 500; margin: 0 9px; letter-spacing: 0; }
  .every em { margin: 0 5px 0 0; }
  .vars { margin-top: 16px; height: 76px; }
  .line { display: flex; height: 32px; gap: 16px; }
  .var { display: flex; gap: 4px; }
  .var.first { margin-right: -1px; }
  .var.tog { margin-right: 4px; }
  .label, .outage { box-sizing: border-box; height: 32px; border: 1px solid #23262b; border-radius: 2px; background: #181b1f; color: #6e9fff; font-size: 12px; font-weight: 500; display: flex; align-items: center; justify-content: center; white-space: nowrap; }
  .plain { background: #22252b; color: #ccccdc; }
  .ex { width: 108px; } .al { width: 49px; } .de { width: 88px; }
  .sel, .swbox { box-sizing: border-box; height: 32px; border: 1px solid #2b2d33; border-radius: 2px; display: flex; align-items: center; padding: 0 8px; }
  .sel u { text-decoration: none; white-space: nowrap; margin-right: 3px; }
  .sel.sm { width: 67px; }
  .swbox { width: 50px; }
  .sw { box-sizing: border-box; width: 32px; height: 16px; border: 1px solid #2b2d33; border-radius: 8px; display: flex; align-items: center; padding: 0 2px; }
  .sw::before { content: ''; width: 12px; height: 12px; border-radius: 6px; background: #85868f; }
  .sw.on { background: #3d71d9; border-color: #3d71d9; justify-content: flex-end; padding: 0 1px; }
  .sw.on::before { background: #fff; }
  .outage { width: 115px; margin-left: auto; margin-right: 4px; color: #ccccdc; gap: 4px; }
  .dash { display: grid; grid-template-columns: repeat(24, minmax(0, 1fr)); grid-auto-rows: 30px; gap: 8px; }
  .row { display: flex; align-items: center; min-width: 0; }
  .row h3 { margin: 0 0 0 2px; font-size: 16px; font-weight: 500; letter-spacing: 0.13px; white-space: nowrap; }
  .shut { background: #181b1f; }
  .row small { font-size: 14px; font-style: italic; color: #75767f; margin-left: 16px; letter-spacing: 0; }
  .grip { margin-left: auto; margin-right: 4px; fill: #44464c; }
  .panel { position: relative; display: flex; flex-direction: column; min-width: 0; min-height: 0; overflow: hidden; }
  h2 { margin: 0; height: 34px; flex: none; line-height: 34px; font-size: 14px; font-weight: 500; text-align: center; white-space: nowrap; letter-spacing: -0.02px; }
  h2.tt { height: 33px; }
  .plot { display: block; width: 100%; flex: 1; min-height: 0; }
  .plot text { font-size: 12px; fill: #c4c4d3; letter-spacing: 0; }
  .grid { stroke: #ccccdc; stroke-opacity: 0.13; stroke-width: 1; }
  .plot .val { font-size: 36px; font-weight: 500; fill: #57f287; }
  .val .unit { font-size: 21px; }
  .brand { display: flex; align-items: center; gap: 6px; font-size: 20px; padding: 38px 0 0 10px; letter-spacing: 0; box-sizing: border-box; }
  .now { box-sizing: border-box; width: 48px; height: 48px; border-radius: 50%; background: #81b5a1; color: #fff; font: 800 19px/45px 'Open Sans', sans-serif; text-align: center; letter-spacing: -0.800px; }
  .now s { text-decoration: none; font-size: 8px; }
  .map { flex-direction: row; align-items: flex-start; padding: 9px 8px; }
  .maptools { position: absolute; left: 23px; top: 9px; width: 35px; z-index: 1; }
  .maptools span { display: flex; height: 32px; align-items: center; justify-content: center; background: #000; border-radius: 2px; }
  .maptools svg { fill: #fade5a; }
  .net { flex: none; }
  .net line { stroke: #48494c; stroke-width: 1; }
  .net text { font: 6.9px 'Liberation Sans', Arial, sans-serif; letter-spacing: 0; fill: #c9c9cf; }
  .corner { position: absolute; left: 0; top: 0; width: 32px; height: 32px; background: #22252b; clip-path: polygon(0 0, 100% 0, 0 100%); color: #8e8f9c; padding: 3px; box-sizing: border-box; }
  .nodata { margin: auto; }
  .code { margin: 7px 9px 0; height: 40px; border: 1px solid #2f3035; border-radius: 4px; background: #141414; box-sizing: border-box; }
  .table { margin: 0 1px; height: 287px; overflow: hidden; }
  .tr { display: grid; grid-template-columns: 392px 150px 150px 150px 1fr; height: 35px; box-sizing: border-box; border-bottom: 1px solid #202226; }
  .tr span { border-right: 1px solid #202226; padding: 0 6px; text-align: right; line-height: 35px; white-space: nowrap; }
  .tr span:first-child { text-align: left; }
  .tr span:last-child { border-right: 0; }
  .th { height: 33px; background: #22252b; color: #6e9fff; border-bottom: 0; }
  .th span { line-height: 32px; padding-right: 10px; border-color: #2c2f35; }
</style>
